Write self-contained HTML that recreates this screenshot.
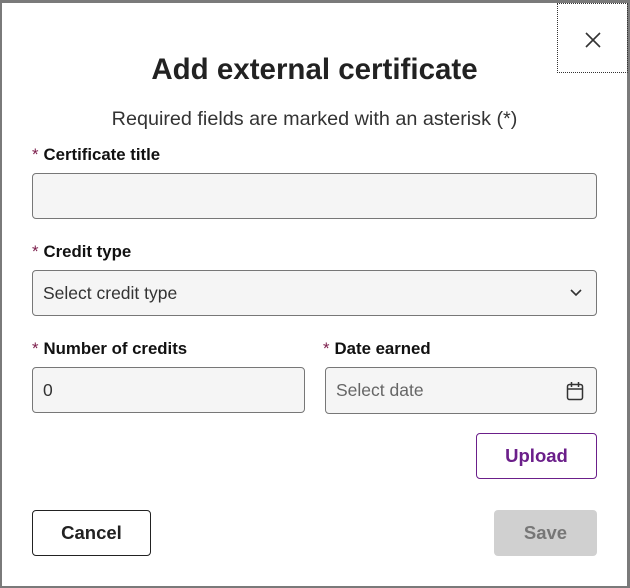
<!DOCTYPE html>
<html><head><style>
*{box-sizing:border-box;margin:0;padding:0}
body{width:630px;height:588px;background:#7a7a7a;font-family:"Liberation Sans",Arial,sans-serif;position:relative;overflow:hidden;color:#222}
.dlg{position:absolute;left:2px;top:3px;width:625px;height:583px;background:#fff}
.abs{position:absolute}
.close{left:555px;top:0;width:71px;height:70px;border:1px dotted #333}
h1{position:absolute;left:0;width:625px;top:50px;text-align:center;font-size:29.5px;font-weight:bold;color:#222}
.sub{left:0;width:625px;top:105px;text-align:center;font-size:19.8px;color:#333}
.lbl{font-size:16.8px;font-weight:bold;color:#111}
.lbl b{color:#7a1c4a;font-weight:normal;margin-right:5px}
.inp{background:#f5f5f5;border:1px solid #777;border-radius:4px;font-size:17.5px;color:#333;padding-left:10px;display:flex;align-items:center}
.btn{border-radius:4px;font-size:18.5px;font-weight:bold;display:flex;align-items:center;justify-content:center}
</style></head><body>
<div class="dlg">
<div class="abs close"><svg class="abs" style="left:27px;top:28px" width="16" height="16" viewBox="0 0 16 16"><path d="M1 1l14 14M15 1L1 15" stroke="#333" stroke-width="1.6"/></svg></div>
<h1>Add external certificate</h1>
<div class="abs sub">Required fields are marked with an asterisk (*)</div>
<div class="abs lbl" style="left:30px;top:142px"><b>*</b>Certificate title</div>
<div class="abs inp" style="left:30px;top:170px;width:565px;height:46px"></div>
<div class="abs lbl" style="left:30px;top:239px"><b>*</b>Credit type</div>
<div class="abs inp" style="left:30px;top:267px;width:565px;height:46px">Select credit type
<svg class="abs" style="left:536px;top:17px" width="14" height="10" viewBox="0 0 14 10"><path d="M2 2l5 5 5-5" fill="none" stroke="#333" stroke-width="1.6"/></svg></div>
<div class="abs lbl" style="left:30px;top:336px"><b>*</b>Number of credits</div>
<div class="abs inp" style="left:30px;top:364px;width:273px;height:46px">0</div>
<div class="abs lbl" style="left:321px;top:336px"><b>*</b>Date earned</div>
<div class="abs inp" style="left:323px;top:364px;width:272px;height:47px;color:#666">Select date
<svg class="abs" style="left:240px;top:13px" width="18" height="20" viewBox="0 0 18 20"><rect x="1.5" y="3.5" width="15" height="15" rx="2" fill="none" stroke="#333" stroke-width="1.5"/><path d="M1.5 8h15M5.5 1v5M12.5 1v5" stroke="#333" stroke-width="1.5"/></svg></div>
<div class="abs btn" style="left:474px;top:430px;width:121px;height:46px;border:1px solid #6b1f8a;color:#6b1f8a">Upload</div>
<div class="abs btn" style="left:30px;top:507px;width:119px;height:46px;border:1px solid #222;color:#222">Cancel</div>
<div class="abs btn" style="left:492px;top:507px;width:103px;height:46px;background:#d0d0d0;color:#777">Save</div>
</div>
</body></html>
